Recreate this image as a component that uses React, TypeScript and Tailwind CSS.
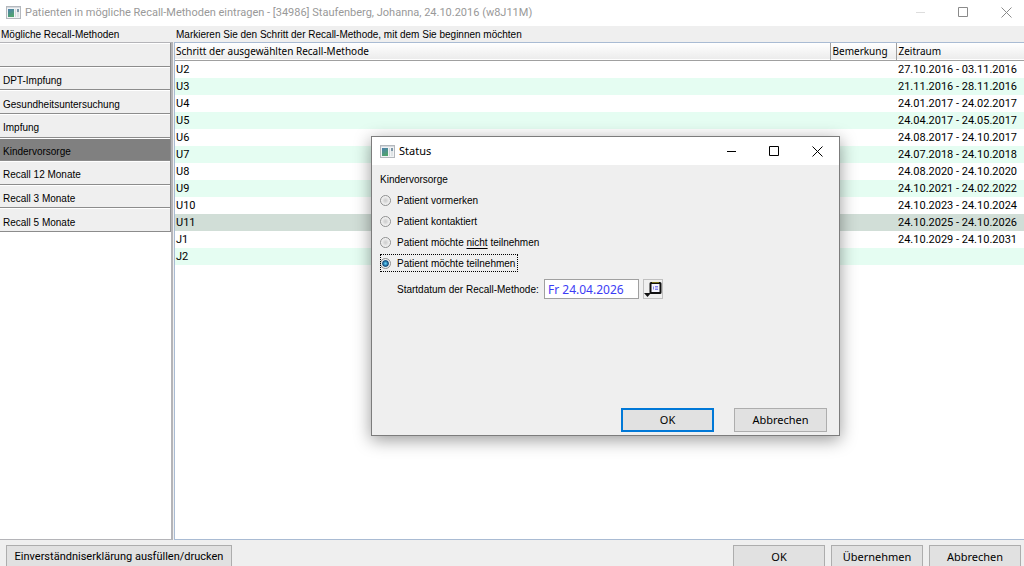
import { useState } from "react";
import clsx from "clsx";

type Step = { name: string; period: string };

const METHODS = [
  "",
  "DPT-Impfung",
  "Gesundheitsuntersuchung",
  "Impfung",
  "Kindervorsorge",
  "Recall 12 Monate",
  "Recall 3 Monate",
  "Recall 5 Monate",
];

const STEPS: Step[] = [
  { name: "U2", period: "27.10.2016 - 03.11.2016" },
  { name: "U3", period: "21.11.2016 - 28.11.2016" },
  { name: "U4", period: "24.01.2017 - 24.02.2017" },
  { name: "U5", period: "24.04.2017 - 24.05.2017" },
  { name: "U6", period: "24.08.2017 - 24.10.2017" },
  { name: "U7", period: "24.07.2018 - 24.10.2018" },
  { name: "U8", period: "24.08.2020 - 24.10.2020" },
  { name: "U9", period: "24.10.2021 - 24.02.2022" },
  { name: "U10", period: "24.10.2023 - 24.10.2024" },
  { name: "U11", period: "24.10.2025 - 24.10.2026" },
  { name: "J1", period: "24.10.2029 - 24.10.2031" },
  { name: "J2", period: "" },
];

const STATUS_OPTIONS = [
  { id: "vormerken", label: <>Patient vormerken</> },
  { id: "kontaktiert", label: <>Patient kontaktiert</> },
  {
    id: "nicht",
    label: (
      <>
        Patient möchte <u className="underline-offset-2">nicht</u> teilnehmen
      </>
    ),
  },
  { id: "teilnehmen", label: <>Patient möchte teilnehmen</> },
];

function AppIcon() {
  return (
    <svg width="15" height="13" viewBox="0 0 15 13" aria-hidden="true">
      <defs>
        <linearGradient id="screen" x1="0" y1="0" x2="0.4" y2="1">
          <stop offset="0" stopColor="#4d7fae" />
          <stop offset="1" stopColor="#4fa36f" />
        </linearGradient>
      </defs>
      <rect x="0.5" y="0.5" width="14" height="12" fill="#f1f3f5" stroke="#b4b8bd" />
      <rect x="1" y="1" width="13" height="1" fill="#d5d9de" />
      <rect x="2" y="3" width="6" height="8" fill="url(#screen)" />
      <rect x="9" y="3" width="1" height="8" fill="#d3d8dc" />
      <rect x="11" y="3" width="2" height="3" fill="#7d97a8" />
      <rect x="11" y="6" width="2" height="5" fill="#dfe4e6" />
    </svg>
  );
}

function WindowButtons({ muted }: { muted?: boolean }) {
  return (
    <div className={clsx("flex", muted ? "-mr-1 text-[#8a8a8a]" : "text-black")}>
      <button
        type="button"
        aria-label="Minimieren"
        className={clsx("flex h-6 w-[43px] items-center justify-center", muted && "text-[#dddddd]")}
      >
        <svg width="11" height="11" viewBox="0 0 11 11" stroke="currentColor">
          <path d="M1 5.5h9" />
        </svg>
      </button>
      <button type="button" aria-label="Maximieren" className="flex h-6 w-[43px] items-center justify-center">
        <svg width="11" height="11" viewBox="0 0 11 11" fill="none" stroke="currentColor">
          <path d="M0.5 0.5h9v9h-9z" />
        </svg>
      </button>
      <button type="button" aria-label="Schließen" className="flex h-6 w-[43px] items-center justify-center">
        <svg width="11" height="11" viewBox="0 0 11 11" fill="none" stroke="currentColor">
          <path d="M0.5 0.5l10 10M10.5 0.5l-10 10" />
        </svg>
      </button>
    </div>
  );
}

function CalendarIcon() {
  return (
    <svg width="18" height="18" viewBox="0 0 18 18" aria-hidden="true">
      <rect x="6.5" y="3" width="10" height="10" rx="0.5" fill="#f4f4ff" stroke="#111" strokeWidth="2" />
      <path d="M8 2.5h7" stroke="#77701c" />
      <path d="M9.5 6.5v3M11 6.5h3M11 8h3M11 9.5h3" stroke="#8484ec" fill="none" />
      <path d="M0 13h7l-3.5 4z" fill="#111" />
    </svg>
  );
}

function StatusDialog() {
  const [status, setStatus] = useState("teilnehmen");
  const [date, setDate] = useState("Fr 24.04.2026");

  return (
    <div
      role="dialog"
      aria-label="Status"
      className="absolute left-[371px] top-[136px] flex h-[300px] w-[469px] flex-col border border-[#7c7c7c] bg-[#efefef] shadow-[0_4px_16px_rgba(0,0,0,0.4)]"
    >
      <div className="flex h-7 shrink-0 items-center justify-between bg-white pl-2">
        <div className="flex items-center gap-1">
          <AppIcon />
          <h2 className="font-['Noto_Sans',sans-serif] text-[11px]">Status</h2>
        </div>
        <WindowButtons />
      </div>

      <div className="flex grow flex-col px-2 pt-2 pb-[3px]">
        <p className="leading-[14px]">Kindervorsorge</p>
        <fieldset className="mt-1 flex flex-col items-start gap-[3px]">
          {STATUS_OPTIONS.map((option) => (
            <label
              key={option.id}
              className={clsx(
                "flex h-[18px] items-center gap-1.5 pr-[3px]",
                status === option.id && "outline-1 -outline-offset-1 outline-dotted outline-black"
              )}
            >
              <input
                type="radio"
                name="status"
                checked={status === option.id}
                onChange={() => setStatus(option.id)}
                className="size-[11px] appearance-none rounded-full border border-[#8e8f8f] bg-[radial-gradient(circle,#d0d0d0_10%,#f6f6f6_70%)] checked:bg-[radial-gradient(circle,#5fd0f8_5%,#0d4a7c_45%,#f0f0f0_60%)]"
              />
              <span>{option.label}</span>
            </label>
          ))}
        </fieldset>
        <div className="mt-[7px] flex items-center pl-[17px]">
          <label htmlFor="start-date" className="w-[147px] whitespace-nowrap">
            Startdatum der Recall-Methode:
          </label>
          <input
            id="start-date"
            value={date}
            onChange={(event) => setDate(event.target.value)}
            className="h-5 w-[95px] border border-[#a0a0a0] bg-white px-[3px] font-['Noto_Sans',sans-serif] text-[12px] text-[#3c3cf5]"
          />
          <button
            type="button"
            aria-label="Kalender öffnen"
            className="ml-1 flex size-5 items-center justify-center border border-[#c0c0c0]"
          >
            <CalendarIcon />
          </button>
        </div>
        <div className="mt-auto flex justify-end gap-5 pr-1 font-['Noto_Sans',sans-serif] text-[11px]">
          <button type="button" className="h-6 w-[93px] border-2 border-[#0078d7] bg-[#e1e1e1]">
            OK
          </button>
          <button type="button" className="h-6 w-[93px] border border-[#adadad] bg-[#e1e1e1]">
            Abbrechen
          </button>
        </div>
      </div>
    </div>
  );
}

export default function App() {
  const [method, setMethod] = useState("Kindervorsorge");
  const [step, setStep] = useState("U11");

  return (
    <div className="relative flex h-screen flex-col overflow-hidden bg-[#efefef] font-['Liberation_Sans',sans-serif] text-[10px] text-black">
      <header className="flex h-[26px] shrink-0 items-center justify-between bg-white pb-px pl-1.5">
        <div className="flex items-center gap-1 text-[#999999]">
          <AppIcon />
          <h1 className="font-['Roboto',sans-serif] text-[11px] leading-4">
            Patienten in mögliche Recall-Methoden eintragen - [34986] Staufenberg, Johanna, 24.10.2016 (w8J11M)
          </h1>
        </div>
        <WindowButtons muted />
      </header>

      <main className="flex min-h-0 grow">
        <section className="flex w-[173px] shrink-0 flex-col">
          <h2 className="h-4 shrink-0 pt-px pl-px leading-4">Mögliche Recall-Methoden</h2>
          <div className="grow border-t border-r-2 border-b border-[#b4b4b8] bg-white">
            <div className="grid h-[189px] auto-rows-fr border-r border-[#8c8c8c]">
              {METHODS.map((name) => (
                <button
                  key={name}
                  type="button"
                  aria-label={name || "Keine Methode"}
                  onClick={() => setMethod(name)}
                  className={clsx(
                    "border-t border-b border-t-white border-b-[#8c8c8c] px-[3px] pt-1 text-left",
                    method === name ? "bg-[#808080]" : "bg-[#efefef]"
                  )}
                >
                  {name}
                </button>
              ))}
            </div>
          </div>
        </section>

        <section className="flex min-w-0 grow flex-col pl-px">
          <h2 className="h-4 shrink-0 pt-px pl-0.5 leading-4">
            Markieren Sie den Schritt der Recall-Methode, mit dem Sie beginnen möchten
          </h2>
          <div className="grow border-t border-b border-l border-[#a9bbd3] bg-white">
            <table className="w-full table-fixed border-collapse">
              <colgroup>
                <col />
                <col className="w-[66px]" />
                <col className="w-[128px]" />
              </colgroup>
              <thead className="font-['Noto_Sans',sans-serif] text-[10px]">
                <tr className="h-[17px] border-b border-[#a0a0a0] bg-linear-to-b from-white to-[#ececec] text-left leading-4">
                  <th className="border-r border-[#a0a0a0] pl-px font-normal">Schritt der ausgewählten Recall-Methode</th>
                  <th className="border-r border-[#a0a0a0] pl-0.5 font-normal">Bemerkung</th>
                  <th className="pl-0.5 font-normal">Zeitraum</th>
                </tr>
              </thead>
              <tbody className="font-['Roboto',sans-serif] text-[11px]">
                {STEPS.map((item) => (
                  <tr
                    key={item.name}
                    onClick={() => setStep(item.name)}
                    className={clsx(
                      "h-[17px] leading-4",
                      step === item.name ? "bg-[#d1ded7]" : "odd:bg-white even:bg-[#e5fdf2]"
                    )}
                  >
                    <td className="pt-px pl-px">{item.name}</td>
                    <td />
                    <td className="pt-px pl-0.5 whitespace-nowrap">{item.period}</td>
                  </tr>
                ))}
              </tbody>
            </table>
          </div>
        </section>
      </main>

      <footer className="flex h-[26px] shrink-0 justify-between pt-[5px] pr-[3px] pl-1.5 font-['Noto_Sans',sans-serif] text-[11px]">
        <button
          type="button"
          className="h-6 w-[226px] border border-[#adadad] bg-[#e1e1e1] font-['Roboto',sans-serif] whitespace-nowrap"
        >
          Einverständniserklärung ausfüllen/drucken
        </button>
        <div className="flex gap-1.5">
          {["OK", "Übernehmen", "Abbrechen"].map((label) => (
            <button key={label} type="button" className="h-6 w-[92px] border border-[#adadad] bg-[#e1e1e1]">
              {label}
            </button>
          ))}
        </div>
      </footer>

      <StatusDialog />
    </div>
  );
}
